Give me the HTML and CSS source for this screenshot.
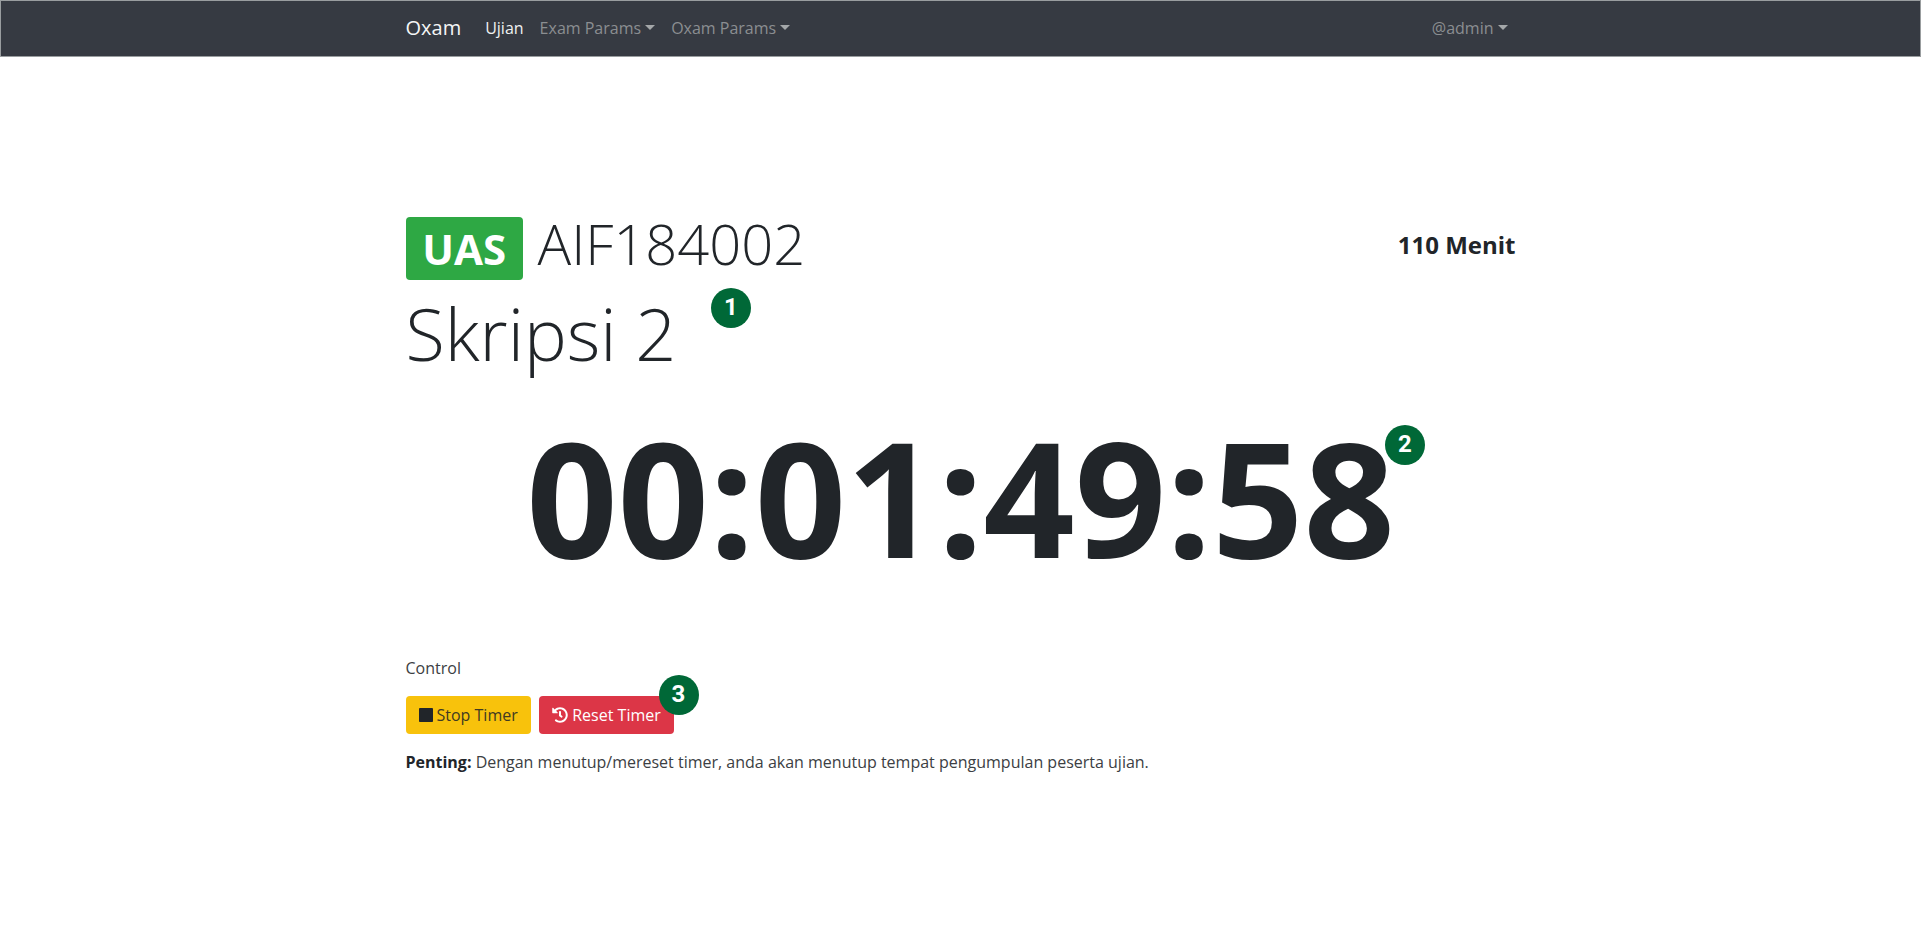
FILE: index.html
```html
<!DOCTYPE html>
<html lang="id">
<head>
<meta charset="utf-8">
<title>Oxam</title>
<link rel="stylesheet" href="styles.css">
</head>
<body>
<nav class="navbar">
  <div class="container navbar-inner">
    <a class="brand">Oxam</a>
    <a class="nav-link active">Ujian</a>
    <a class="nav-link caret">Exam Params</a>
    <a class="nav-link caret">Oxam Params</a>
    <a class="nav-link caret user">@admin</a>
  </div>
</nav>
<main class="container main">
  <header class="exam-head">
    <h1 class="code"><span class="badge">UAS</span> AIF184002</h1>
    <div class="duration">110 Menit</div>
  </header>
  <h2 class="title">Skripsi 2<span class="marker marker-1">1</span></h2>
  <div class="timer"><span class="clock">00:01:49:58</span><span class="marker marker-2">2</span></div>
  <p class="label">Control</p>
  <div class="buttons">
    <button class="btn stop"><svg class="icon-stop" viewBox="0 0 448 512"><path fill="currentColor" d="M424 32H24C11 32 0 43 0 56v400c0 13 11 24 24 24h400c13 0 24-11 24-24V56c0-13-11-24-24-24z"/></svg>Stop Timer</button>
    <button class="btn reset"><svg class="icon-reset" viewBox="0 0 512 512"><path fill="currentColor" d="M504 255.531c.253 136.640-111.180 248.372-247.820 248.468-59.015.042-113.223-20.530-155.822-54.911-11.077-8.940-11.905-25.541-1.839-35.607l11.267-11.267c8.609-8.609 22.353-9.551 31.891-1.984C173.062 425.135 212.781 440 256 440c101.705 0 184-82.311 184-184 0-101.705-82.311-184-184-184-48.814 0-93.149 18.969-126.068 49.932l50.754 50.754c10.080 10.080 2.941 27.314-11.313 27.314H24c-8.837 0-16-7.163-16-16V38.627c0-14.254 17.234-21.393 27.314-11.314l49.372 49.372C129.209 34.136 189.552 8 256 8c136.810 0 247.747 110.780 248 247.531zm-180.912 78.784l9.823-12.630c8.138-10.463 6.253-25.542-4.210-33.679L288 256.349V152c0-13.255-10.745-24-24-24h-16c-13.255 0-24 10.745-24 24v135.651l65.409 50.874c10.463 8.137 25.541 6.253 33.679-4.210z"/></svg>Reset Timer</button>
    <span class="marker marker-3">3</span>
  </div>
  <p class="note"><b>Penting:</b> Dengan menutup/mereset timer, anda akan menutup tempat pengumpulan peserta ujian.</p>
</main>
</body>
</html>
```
FILE: styles.css
```css
* { box-sizing: border-box; }
body { margin: 0; background: #fff; color: #212529; font: 400 16px/24px "Open Sans", "Noto Sans", sans-serif; }
.container { width: 1140px; margin: 0 auto; padding: 0 15px; }
.navbar { height: 57px; background: #363a42; border: 1px solid #999d9f; }
.navbar-inner { display: flex; align-items: center; height: 54px; }
.brand { font-size: 20px; line-height: 30px; color: #f4f5f5; margin-right: 16px; }
.nav-link { padding: 8px; color: #8b8e91; }
.nav-link.active { color: #f0f1f1; }
.caret::after { content: ""; display: inline-block; margin-left: 4px; vertical-align: 4px; border-top: 5px solid #a4a7a9; border-left: 5px solid transparent; border-right: 5px solid transparent; }
.user { margin-left: auto; }
.main { padding-top: 146px; }
.exam-head { display: flex; justify-content: space-between; align-items: center; height: 83px; }
.code { margin: 0; font-size: 56px; line-height: 67px; font-weight: 300; }
.badge { display: inline-block; padding: 10px 16.800px; border-radius: 4px; background: #2ea844; color: #fff; font-size: 42px; line-height: 43px; font-weight: 700; }
.duration { font-size: 24px; font-weight: 700; }
.title { position: relative; margin: 4px 0 0; font-size: 72px; line-height: 86px; font-weight: 300; }
.timer { position: relative; margin-top: 24px; text-align: center; height: 192px; }
.clock { font-size: 160px; line-height: 192px; font-weight: 700; }
.label { margin: 64px 0 16px; color: #3c4043; }
.buttons { position: relative; display: flex; gap: 8.500px; }
.btn { display: flex; align-items: center; height: 38px; padding: 0 13px; border: 0; border-radius: 4px; font: inherit; }
.stop { background: #f8c20c; color: #3f3a22; }
.reset { background: #dc3647; color: #fff; }
.icon-stop { width: 14px; height: 16px; margin-right: 4px; color: #212529; }
.icon-reset { width: 16px; height: 16px; margin-right: 4px; }
.note { margin: 16px 0 0; color: #3c4043; }
.note b { color: #212529; }
.marker { position: absolute; width: 40px; height: 40px; border-radius: 50%; background: #006837; color: #fff; font: 700 24px/38px Roboto, sans-serif; text-align: center; }
.marker-1 { left: 305.500px; top: -2px; }
.marker-2 { left: 979.500px; top: 24.500px; }
.marker-3 { left: 253px; top: -21.500px; }
```
